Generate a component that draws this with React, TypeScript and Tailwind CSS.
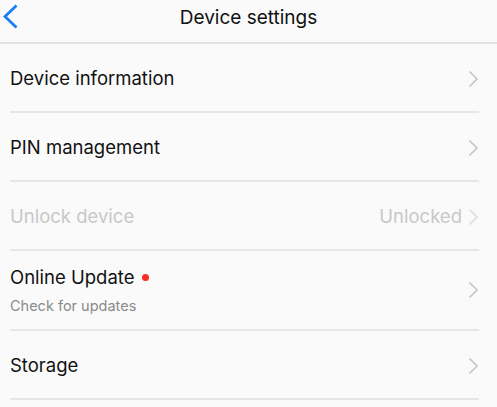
const Chevron = ({ light }: { light?: boolean }) => (
  <svg width="11" height="18" viewBox="0 0 11 18" fill="none" className="shrink-0">
    <path
      d="M1.5 1.5 L9 9 L1.5 16.5"
      stroke={light ? "#dcdcdc" : "#c4c4c4"}
      strokeWidth="1.6"
    />
  </svg>
);

type Row = {
  title: string;
  sub?: string;
  value?: string;
  dot?: boolean;
  disabled?: boolean;
};

const rows: Row[] = [
  { title: "Device information" },
  { title: "PIN management" },
  { title: "Unlock device", value: "Unlocked", disabled: true },
  { title: "Online Update", sub: "Check for updates", dot: true },
  { title: "Storage" },
];

export default function App() {
  return (
    <div
      className="h-[407px] w-[497px] overflow-hidden bg-[#fafafa]"
      style={{ fontFamily: "Inter, 'Liberation Sans', Arial, sans-serif" }}
    >
      {/* Header */}
      <div className="relative flex h-[44px] items-center justify-center border-b-2 border-[#e2e2e2]">
        <svg
          width="20"
          height="30"
          viewBox="0 0 20 30"
          fill="none"
          className="absolute left-0 top-[2px]"
        >
          <path d="M16.5 3.5 L5 14.5 L16.5 25.5" stroke="#1a7ff5" strokeWidth="2.8" />
        </svg>
        <span className="mb-[6px] text-[19px] text-[#111]">Device settings</span>
      </div>

      {/* List */}
      <div className="pl-[10px] pr-[18px]">
        {rows.map((row) => (
          <div
            key={row.title}
            className={`flex items-center justify-between border-b-2 border-[#e6e6e6] ${
              row.sub ? "h-[80px]" : "h-[69px] pt-[3px]"
            }`}
          >
            <div className="flex flex-col">
              <div className="flex items-center">
                <span
                  className={`text-[18.5px] ${
                    row.disabled ? "text-[#c8c8c8]" : "text-[#111]"
                  }`}
                >
                  {row.title}
                </span>
                {row.dot && (
                  <span className="ml-[8px] h-[7px] w-[7px] rounded-full bg-[#fc2d22]" />
                )}
              </div>
              {row.sub && (
                <span className="mt-[3px] text-[14.5px] text-[#8a8a8a]">{row.sub}</span>
              )}
            </div>
            <div className="flex items-center gap-[6px]">
              {row.value && (
                <span className="text-[18.5px] text-[#c8c8c8]">{row.value}</span>
              )}
              <Chevron light={row.disabled} />
            </div>
          </div>
        ))}
      </div>
    </div>
  );
}
